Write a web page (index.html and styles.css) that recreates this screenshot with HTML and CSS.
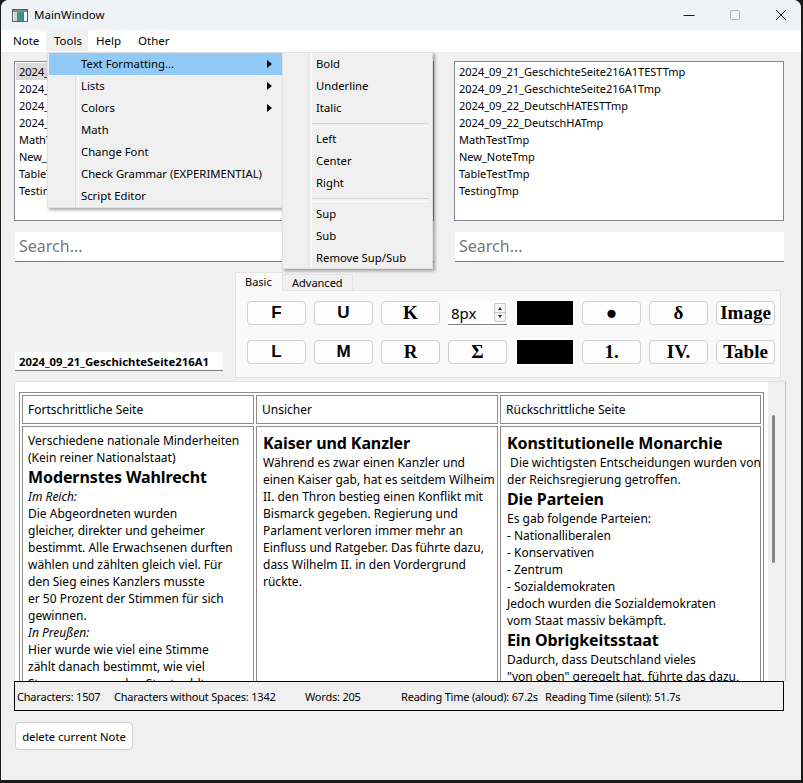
FILE: index.html
```html
<!DOCTYPE html>
<html lang="de">
<head>
<meta charset="utf-8">
<title>MainWindow</title>
<link rel="stylesheet" href="styles.css">
</head>
<body>
<div class="window">
  <div class="titlebar">
    <svg class="app-icon" width="16" height="13" viewBox="0 0 16 13">
      <rect x="0.5" y="0.5" width="15" height="12" fill="#f4f4f4" stroke="#5c5c5c"/>
      <rect x="1" y="1" width="14" height="2" fill="#8a8a8a"/>
      <rect x="2" y="3" width="3" height="9" fill="#d0d0d0"/>
      <rect x="5" y="3" width="5" height="9" fill="#3f9a78"/>
      <rect x="10" y="3" width="2" height="9" fill="#3c7fc4"/>
      <rect x="12" y="3" width="3" height="9" fill="#ffffff"/>
    </svg>
    <span class="title">MainWindow</span>
    <div class="controls">
      <span class="ctl"><svg width="12" height="12" viewBox="0 0 12 12"><path d="M0.5 6.5H11.5" stroke="#1a1a1a" stroke-width="1"/></svg></span>
      <span class="ctl"><svg width="12" height="12" viewBox="0 0 12 12"><rect x="1.5" y="1.5" width="9" height="9" rx="1" fill="none" stroke="#b4b4b4" stroke-width="1"/></svg></span>
      <span class="ctl"><svg width="12" height="12" viewBox="0 0 12 12"><path d="M1 1L11 11M11 1L1 11" stroke="#1a1a1a" stroke-width="1"/></svg></span>
    </div>
  </div>

  <div class="menubar">
    <span class="mitem m-note">Note</span>
    <span class="mitem m-tools active">Tools</span>
    <span class="mitem m-help">Help</span>
    <span class="mitem m-other">Other</span>
  </div>

  <div class="main">
    <div class="top">
      <div class="col col-left">
        <div class="list">
          <div class="li selected">2024_09_21_GeschichteSeite216A1TESTTmp</div>
          <div class="li">2024_09_21_GeschichteSeite216A1Tmp</div>
          <div class="li">2024_09_22_DeutschHATESTTmp</div>
          <div class="li">2024_09_22_DeutschHATmp</div>
          <div class="li">MathTestTmp</div>
          <div class="li">New_NoteTmp</div>
          <div class="li">TableTestTmp</div>
          <div class="li">TestingTmp</div>
        </div>
        <div class="search">Search...</div>
      </div>
      <div class="col col-right">
        <div class="list">
          <div class="li">2024_09_21_GeschichteSeite216A1TESTTmp</div>
          <div class="li">2024_09_21_GeschichteSeite216A1Tmp</div>
          <div class="li">2024_09_22_DeutschHATESTTmp</div>
          <div class="li">2024_09_22_DeutschHATmp</div>
          <div class="li">MathTestTmp</div>
          <div class="li">New_NoteTmp</div>
          <div class="li">TableTestTmp</div>
          <div class="li">TestingTmp</div>
        </div>
        <div class="search">Search...</div>
      </div>
    </div>

    <div class="toolrow">
      <div class="title-input">2024_09_21_GeschichteSeite216A1</div>
      <div class="tabs">
        <div class="tabbar">
          <span class="tab tab-active">Basic</span>
          <span class="tab">Advanced</span>
        </div>
        <div class="pane">
          <span class="btn sans">F</span>
          <span class="btn sans">U</span>
          <span class="btn serif">K</span>
          <span class="spin"><span class="spin-val">8px</span><span class="spin-arrows"><span class="arr up"></span><span class="arr down"></span></span></span>
          <span class="swatch"><span class="swatch-in"></span></span>
          <span class="btn serif">&#9679;</span>
          <span class="btn serif">&delta;</span>
          <span class="btn serif">Image</span>

          <span class="btn sans">L</span>
          <span class="btn sans">M</span>
          <span class="btn serif">R</span>
          <span class="btn serif">&Sigma;</span>
          <span class="swatch"><span class="swatch-in"></span></span>
          <span class="btn serif">1.</span>
          <span class="btn serif">IV.</span>
          <span class="btn serif">Table</span>
        </div>
      </div>
    </div>

    <div class="editor">
      <div class="viewport">
        <table class="doc">
          <tr>
            <td class="c1">Fortschrittliche Seite</td>
            <td class="c2">Unsicher</td>
            <td class="c3">Rückschrittliche Seite</td>
          </tr>
          <tr class="body-row">
            <td>
              Verschiedene nationale Minderheiten<br>
              (Kein reiner Nationalstaat)
              <span class="h">Modernstes Wahlrecht</span>
              <i>Im Reich:</i><br>
              Die Abgeordneten wurden<br>
              gleicher, direkter und geheimer<br>
              bestimmt. Alle Erwachsenen durften<br>
              wählen und zählten gleich viel. Für<br>
              den Sieg eines Kanzlers musste<br>
              er 50 Prozent der Stimmen für sich<br>
              gewinnen.<br>
              <i>In Preußen:</i><br>
              Hier wurde wie viel eine Stimme<br>
              zählt danach bestimmt, wie viel<br>
              Steuern man an den Staat zahlte.
            </td>
            <td>
              <span class="h">Kaiser und Kanzler</span>
              Während es zwar einen Kanzler und<br>
              einen Kaiser gab, hat es seitdem Wilheim<br>
              II. den Thron bestieg einen Konflikt mit<br>
              Bismarck gegeben. Regierung und<br>
              Parlament verloren immer mehr an<br>
              Einfluss und Ratgeber. Das führte dazu,<br>
              dass Wilhelm II. in den Vordergrund<br>
              rückte.
            </td>
            <td>
              <span class="h">Konstitutionelle Monarchie</span>
              &nbsp;Die wichtigsten Entscheidungen wurden von<br>
              der Reichsregierung getroffen.
              <span class="h">Die Parteien</span>
              Es gab folgende Parteien:<br>
              - Nationalliberalen<br>
              - Konservativen<br>
              - Zentrum<br>
              - Sozialdemokraten<br>
              Jedoch wurden die Sozialdemokraten<br>
              vom Staat massiv bekämpft.
              <span class="h">Ein Obrigkeitsstaat</span>
              Dadurch, dass Deutschland vieles<br>
              "von oben" geregelt hat, führte das dazu,
            </td>
          </tr>
        </table>
      </div>
      <div class="scrollbar"><div class="thumb"></div></div>
    </div>

    <div class="status">
      <span class="st st1">Characters: 1507</span>
      <span class="st st2">Characters without Spaces: 1342</span>
      <span class="st st3">Words: 205</span>
      <span class="st st4">Reading Time (aloud): 67.2s</span>
      <span class="st st5">Reading Time (silent): 51.7s</span>
    </div>

    <div class="bottom">
      <span class="delete-btn">delete current Note</span>
    </div>
  </div>

  <div class="menu">
    <div class="mi hl">Text Formatting...<span class="sub-arrow"></span></div>
    <div class="mi">Lists<span class="sub-arrow"></span></div>
    <div class="mi">Colors<span class="sub-arrow"></span></div>
    <div class="mi">Math</div>
    <div class="mi">Change Font</div>
    <div class="mi">Check Grammar (EXPERIMENTIAL)</div>
    <div class="mi">Script Editor</div>
  </div>

  <div class="submenu">
    <div class="mi">Bold</div>
    <div class="mi">Underline</div>
    <div class="mi">Italic</div>
    <div class="sep"></div>
    <div class="mi">Left</div>
    <div class="mi">Center</div>
    <div class="mi">Right</div>
    <div class="sep"></div>
    <div class="mi">Sup</div>
    <div class="mi">Sub</div>
    <div class="mi">Remove Sup/Sub</div>
  </div>
</div>
</body>
</html>
```

FILE: styles.css
```css
* { box-sizing: border-box; }
html, body { margin: 0; padding: 0; }
body {
  background: #1c1c1c;
  width: 803px;
  height: 783px;
  overflow: hidden;
  font-family: "Noto Sans", "Open Sans", sans-serif;
  font-size: 12px;
  color: #000;
}
.window {
  margin-left: 1px;
  width: 800px;
  height: 780px;
  background: #f0f0f0;
  border-radius: 8px 8px 0 0;
  position: relative;
  overflow: hidden;
  display: flex;
  flex-direction: column;
}

/* title bar */
.titlebar {
  height: 30px;
  flex: 0 0 30px;
  background: #eff3f8;
  display: flex;
  align-items: center;
  padding-left: 11px;
}
.app-icon { margin-right: 6px; }
.title { font-size: 11.5px; line-height: 16px; }
.controls { margin-left: auto; margin-right: -3px; display: flex; height: 30px; }
.ctl { width: 46px; height: 30px; display: flex; align-items: center; justify-content: center; }

/* menu bar */
.menubar {
  height: 22px;
  flex: 0 0 22px;
  background: #fff;
  display: flex;
  padding-left: 4px;
  font-size: 11.5px;
}
.mitem { display: block; height: 21px; line-height: 21px; padding-left: 8px; }
.m-note { width: 41px; }
.m-tools { width: 42px; }
.m-help { width: 42px; }
.m-other { width: 48px; }
.mitem.active { background: #f0f0f0; }

/* main area */
.main {
  flex: 1;
  display: flex;
  flex-direction: column;
  padding: 9px 16px 0 13px;
}
.top { display: flex; }
.col { display: flex; flex-direction: column; }
.col-left { width: 420px; }
.col-right { flex: 1; margin-left: 20px; margin-right: 1px; }
.list {
  height: 160px;
  background: #fff;
  border: 1px solid #828790;
  padding: 1px 1px 0 1px;
  font-size: 11px;
}
.li { height: 17px; line-height: 17px; padding-left: 3px; white-space: nowrap; }
.li.selected { background: #d9d9d9; }
.search {
  margin-top: 11px;
  height: 30px;
  background: #fff;
  border-bottom: 1px solid #7a7a7a;
  padding-left: 4px;
  font-size: 16px;
  line-height: 29px;
  color: #777;
}
.col-left .search { margin-left: 1px; }
.col-right .search { margin-left: 1px; }

/* tool row */
.toolrow { margin-top: 10px; height: 106px; display: flex; }
.title-input {
  align-self: flex-end;
  margin-bottom: 7px;
  margin-left: 1px;
  width: 208px;
  height: 19px;
  background: #fff;
  border-bottom: 1px solid #7a7a7a;
  padding-left: 4px;
  font-weight: bold;
  font-size: 11.35px;
  line-height: 19px;
}
.tabs { margin-left: 12px; width: 546px; display: flex; flex-direction: column; }
.tabbar { height: 18px; display: flex; align-items: flex-end; position: relative; z-index: 1; }
.tab {
  display: block;
  height: 16px;
  line-height: 15px;
  padding: 0 9px;
  border: 1px solid #e3e3e3;
  border-bottom: none;
  border-left: none;
  background: #f0f0f0;
  font-size: 11px;
}
.tab-active {
  height: 19px;
  margin-bottom: -1px;
  background: #f9f9f9;
  border-left: 1px solid #e3e3e3;
  line-height: 17px;
  width: 48px;
}
.pane {
  height: 88px;
  background: #f9f9f9;
  border: 1px solid #e3e3e3;
  padding: 10px 0 0 11px;
  display: grid;
  grid-template-columns: repeat(8, 59px);
  grid-auto-rows: 24px;
  column-gap: 8px;
  row-gap: 15px;
}
.btn {
  display: flex;
  align-items: center;
  justify-content: center;
  background: #fdfdfd;
  border: 1px solid #d0d0d0;
  border-radius: 4px;
  font-weight: bold;
  color: #000;
}
.btn.sans { font-family: "Liberation Sans", Arial, sans-serif; font-size: 17px; }
.btn.serif { font-family: "Liberation Serif", "Times New Roman", serif; font-size: 19px; }
.spin {
  display: flex;
  align-items: center;
  background: #fdfdfd;
  border-bottom: 1px solid #808080;
  padding-left: 3px;
}
.spin-val { flex: 1; font-family: "Noto Sans", sans-serif; font-size: 15px; line-height: 22px; }
.spin-arrows {
  width: 12px;
  height: 19px;
  margin-right: 1px;
  border: 1px solid #c8c8c8;
  border-radius: 2px;
  background: #f3f3f3;
  display: flex;
  flex-direction: column;
}
.arr { flex: 1; position: relative; }
.arr.up { border-bottom: 1px solid #c8c8c8; }
.arr::after {
  content: "";
  position: absolute;
  left: 3px;
  top: 3px;
  border-left: 2.5px solid transparent;
  border-right: 2.5px solid transparent;
}
.arr.up::after { border-bottom: 3px solid #333; }
.arr.down::after { border-top: 3px solid #333; top: 2px; }
.swatch {
  margin: -1px -1px -2px 0;
  background: #fff;
  padding: 1px 2px 2px 2px;
  display: flex;
}
.swatch-in { flex: 1; background: #000; }

/* editor */
.editor {
  margin-top: 3px;
  margin-right: -1px;
  height: 300px;
  display: flex;
  background: #fff;
  border: 1px solid #e3e3e3;
  border-right-color: #b8c4d4;
  border-bottom: none;
}
.viewport { flex: 1; overflow: hidden; }
.scrollbar { width: 17px; background: #f0f0f0; position: relative; }
.thumb {
  position: absolute;
  left: 4px;
  top: 33px;
  width: 3px;
  height: 148px;
  background: #858585;
  border-radius: 2px;
}
table.doc {
  margin: 10px 0 0 4px;
  width: 745px;
  table-layout: fixed;
  border-collapse: separate;
  border-spacing: 2px;
  border: 1px solid #8c8c8c;
  font-family: "Noto Sans", sans-serif;
  font-size: 12px;
  line-height: 17px;
}
table.doc td {
  border: 1px solid #8c8c8c;
  padding: 5px 5px 5px 5px;
  vertical-align: top;
  white-space: nowrap;
  overflow: hidden;
}
td.c1 { width: 232px; }
td.c2 { width: 242px; padding-left: 6px; }
td.c3 { width: 261px; padding-left: 6px; }
.body-row td { height: 420px; }
.body-row td:nth-child(2), .body-row td:nth-child(3) { padding-left: 6px; }
.h { display: block; font-size: 16px; font-weight: bold; line-height: 22px; letter-spacing: -0.1px; }
.body-row td:nth-child(3) .h { letter-spacing: -0.1px; }

/* status */
.status {
  height: 30px;
  margin-right: 1px;
  border: 1px solid #000;
  display: flex;
  align-items: center;
  padding-left: 2px;
  white-space: nowrap;
  font-size: 11px;
  letter-spacing: -0.2px;
}
.st { display: block; }
.st1 { width: 97px; }
.st2 { width: 191px; }
.st3 { width: 96px; }
.st4 { width: 144px; }

/* bottom */
.bottom { margin-top: 11px; padding-left: 1px; }
.delete-btn {
  display: inline-flex;
  align-items: center;
  justify-content: center;
  width: 118px;
  height: 28px;
  background: #fdfdfd;
  border: 1px solid #d0d0d0;
  border-radius: 4px;
  font-size: 11.3px;
}

/* menus */
.menu, .submenu {
  position: absolute;
  top: 52px;
  background: #f0f0f0;
  border: 1px solid #e0e0e0;
  box-shadow: 2px 2px 3px rgba(0, 0, 0, 0.35);
  font-size: 11.3px;
}
.menu { left: 46px; width: 237px; height: 156px; z-index: 5; }
.submenu { left: 281px; width: 151px; height: 217px; z-index: 6; }
.menu::before, .submenu::before {
  content: "";
  position: absolute;
  top: 0;
  bottom: 0;
  width: 2px;
  border-left: 1px solid #e3e3e3;
  border-right: 1px solid #fbfbfb;
}
.menu::before { left: 27px; }
.submenu::before { left: 25px; }
.mi {
  position: relative;
  z-index: 1;
  height: 22px;
  line-height: 22px;
  margin: 0 1px;
  padding-left: 32px;
  white-space: nowrap;
}
.submenu .mi { padding-left: 32px; }
.mi.hl { background: #91c9f7; }
.sub-arrow {
  position: absolute;
  right: 10px;
  top: 7px;
  border-left: 5px solid #000;
  border-top: 4px solid transparent;
  border-bottom: 4px solid transparent;
}
.sep {
  height: 9px;
  margin: 0 3px 0 29px;
  position: relative;
  z-index: 1;
}
.sep::after {
  content: "";
  position: absolute;
  left: 0;
  right: 0;
  top: 4px;
  height: 2px;
  border-top: 1px solid #d7d7d7;
  border-bottom: 1px solid #fbfbfb;
}
```
